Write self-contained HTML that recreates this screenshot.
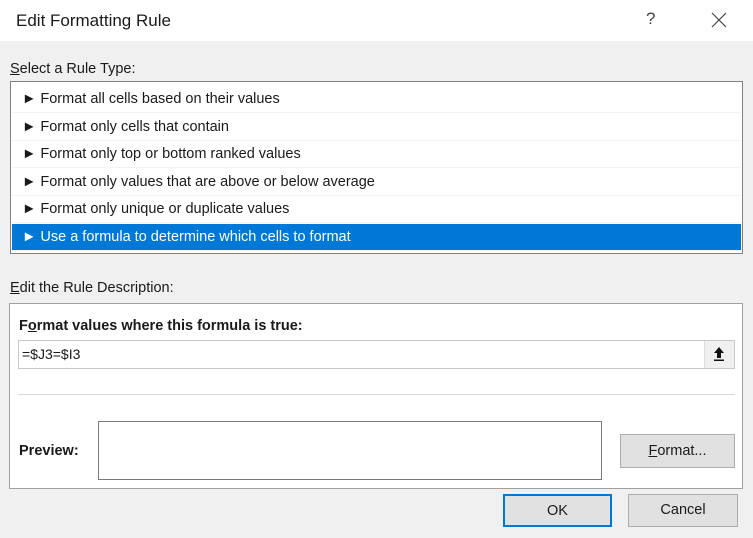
<!DOCTYPE html>
<html><head><style>
*{margin:0;padding:0;box-sizing:border-box}
body{width:753px;height:538px;background:#f0f0f0;font-family:"Liberation Sans",sans-serif;color:#1a1a1a;position:relative;overflow:hidden;font-size:14px}
.a{position:absolute}
.title{left:0;top:0;width:753px;height:41px;background:#fff}
.row{position:absolute;left:1px;width:729px;height:27px;line-height:27px;padding-left:10px;font-size:14.5px;border-bottom:1px solid #f2f2f2}
.row.sel{background:#0078d7;color:#fff}
.btn{position:absolute;background:#e1e1e1;border:1px solid #adadad;text-align:center;font-size:14.5px}
</style></head><body>
<div class="a title"></div>
<div class="a" style="left:16px;top:11px;font-size:17px">Edit Formatting Rule</div>
<div class="a" style="left:646px;top:9px;font-size:17px;color:#444">?</div>
<svg class="a" style="left:711px;top:12px" width="16" height="16"><path d="M1 1L15 15M15 1L1 15" stroke="#444" stroke-width="1.2"/></svg>
<div class="a" style="left:10px;top:61px;font-size:14.5px"><u>S</u>elect a Rule Type:</div>
<div class="a" style="left:10px;top:81px;width:733px;height:173px;background:#fff;border:1px solid #828282">
<div class="row" style="top:4px">► Format all cells based on their values</div>
<div class="row" style="top:32px">► Format only cells that contain</div>
<div class="row" style="top:59px">► Format only top or bottom ranked values</div>
<div class="row" style="top:87px">► Format only values that are above or below average</div>
<div class="row" style="top:114px">► Format only unique or duplicate values</div>
<div class="row sel" style="top:142px">► Use a formula to determine which cells to format</div>
</div>
<div class="a" style="left:10px;top:280px;font-size:14.5px"><u>E</u>dit the Rule Description:</div>
<div class="a" style="left:9px;top:303px;width:734px;height:186px;background:#fff;border:1px solid #a0a0a0"></div>
<div class="a" style="left:19px;top:318px;font-size:14.5px;font-weight:bold">F<u>o</u>rmat values where this formula is true:</div>
<div class="a" style="left:18px;top:340px;width:717px;height:29px;background:#fff;border:1px solid #c8c8c8"></div>
<div class="a" style="left:22px;top:346px;font-size:14px">=$J3=$I3</div>
<div class="a" style="left:704px;top:341px;width:30px;height:27px;background:#f0f0f0;border-left:1px solid #ddd"></div>
<svg class="a" style="left:713px;top:346px" width="12" height="16"><path d="M6 1L1 7H4V12H8V7H11Z" fill="#111"/><rect x="1" y="13.5" width="10" height="1.5" fill="#111"/></svg>
<div class="a" style="left:18px;top:394px;width:717px;height:1px;background:#d8d8d8"></div>
<div class="a" style="left:19px;top:443px;font-size:14.5px;font-weight:bold">Preview:</div>
<div class="a" style="left:98px;top:421px;width:504px;height:59px;background:#fff;border:1px solid #7a7a7a"></div>
<div class="btn" style="left:620px;top:434px;width:115px;height:34px;line-height:32px"><u>F</u>ormat...</div>
<div class="btn" style="left:503px;top:494px;width:109px;height:33px;line-height:30px;border:2px solid #0078d7">OK</div>
<div class="btn" style="left:628px;top:494px;width:110px;height:33px;line-height:31px">Cancel</div>
</body></html>
